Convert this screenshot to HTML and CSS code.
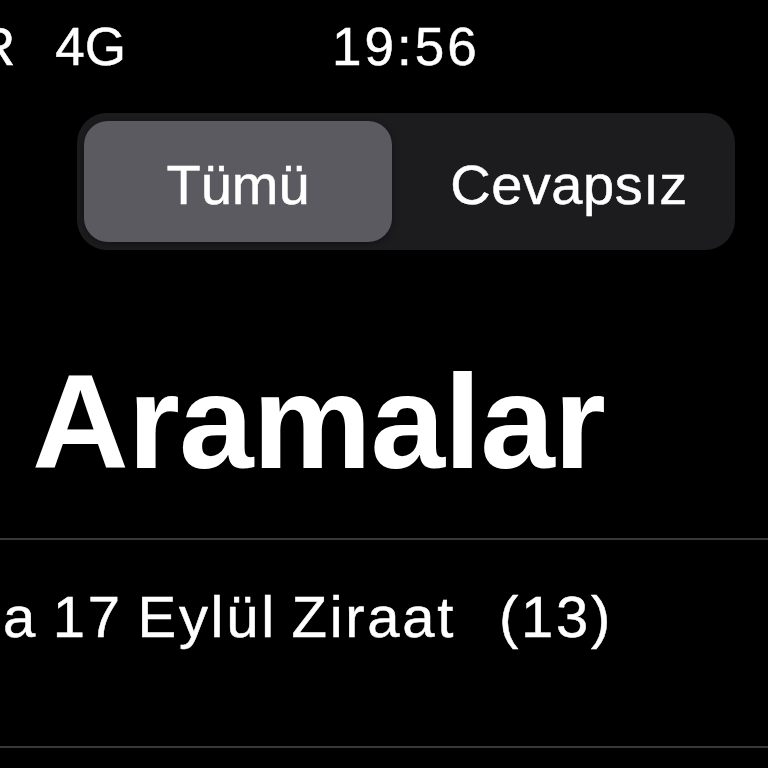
FILE: index.html
```html
<!DOCTYPE html>
<html lang="tr">
<head>
<meta charset="utf-8">
<title>Aramalar</title>
<link rel="stylesheet" href="styles.css">
</head>
<body>
<div class="screen">
  <div class="status-bar">
    <div class="carrier"><span class="carrier-name">TR</span><span class="network">4G</span></div>
    <div class="clock">19:56</div>
  </div>

  <div class="segmented">
    <div class="segment segment-active">Tümü</div>
    <div class="segment segment-second">Cevapsız</div>
  </div>

  <h1 class="title">Aramalar</h1>

  <div class="call-list">
    <div class="call-row"><span class="call-name">a 17 Eylül Ziraat</span><span class="call-count">(13)</span></div>
  </div>
</div>
</body>
</html>
```

FILE: styles.css
```css
html, body {
  margin: 0;
  padding: 0;
  background: #000;
}

.screen {
  width: 768px;
  height: 768px;
  overflow: hidden;
  background: #000;
  color: #fff;
  font-family: "Liberation Sans", Arial, sans-serif;
}

/* status bar */
.status-bar {
  display: flex;
  align-items: flex-start;
  padding-top: 20px;
  height: 53px;
  font-size: 53px;
  line-height: 53px;
  -webkit-text-stroke: 0.5px #fff;
}

.carrier {
  width: 126px;
  display: flex;
  justify-content: flex-end;
  gap: 40px;
  overflow: hidden;
  white-space: nowrap;
  flex: none;
}

.clock {
  margin-left: 206px;
  letter-spacing: 3px;
}

/* segmented control */
.segmented {
  margin: 40px 0 0 77px;
  width: 658px;
  height: 137px;
  box-sizing: border-box;
  padding: 8px 7px;
  background: #1c1c1f;
  border-radius: 30px;
  display: flex;
  font-size: 56px;
  line-height: 56px;
  -webkit-text-stroke: 0.5px #fff;
}

.segment {
  display: flex;
  align-items: center;
  justify-content: center;
  padding-top: 6px;
  box-sizing: border-box;
}

.segment-active {
  width: 308px;
  background: #5b5a60;
  border-radius: 24px;
  box-shadow: 0 2px 6px rgba(0, 0, 0, 0.35);
}

.segment-second {
  flex: 1;
  padding-left: 18px;
  letter-spacing: 0.5px;
}

/* title */
.title {
  margin: 105px 0 0 0;
  padding: 0 0 49px 32px;
  font-size: 134px;
  line-height: 134px;
  font-weight: 700;
  letter-spacing: -1px;
}

/* list */
.call-list {
  border-top: 2px solid #38383b;
}

.call-row {
  padding: 48px 0 100px 3px;
  border-bottom: 2px solid #38383b;
  font-size: 58px;
  line-height: 58px;
  letter-spacing: 2.7px;
  word-spacing: -4px;
  white-space: nowrap;
  display: flex;
  -webkit-text-stroke: 0.5px #fff;
}

.call-count {
  margin-left: 43px;
}
```
